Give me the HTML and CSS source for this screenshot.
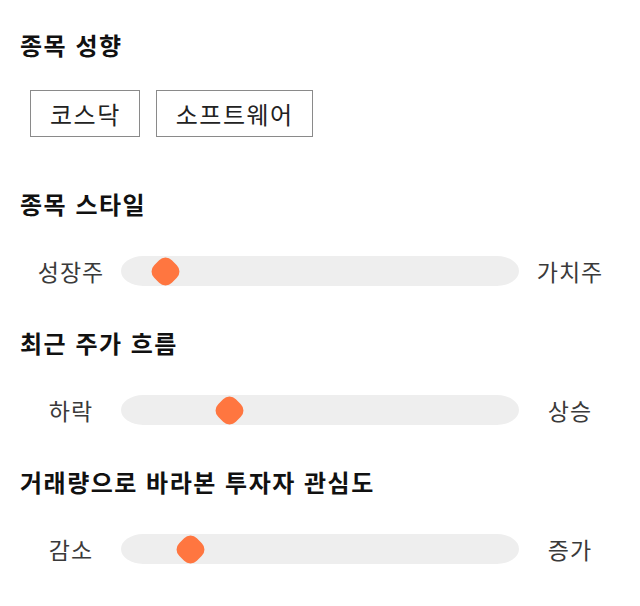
FILE: index.html
```html
<!DOCTYPE html>
<html lang="ko">
<head>
<meta charset="utf-8">
<link rel="stylesheet" href="styles.css">
</head>
<body>
<div class="page">
  <h2 class="title">종목 성향</h2>
  <div class="chips">
    <span class="chip">코스닥</span>
    <span class="chip">소프트웨어</span>
  </div>

  <h2 class="title title-gap">종목 스타일</h2>
  <div class="slider-row">
    <span class="lbl">성장주</span>
    <div class="track"><span class="thumb" style="left:44px"></span></div>
    <span class="lbl">가치주</span>
  </div>

  <h2 class="title">최근 주가 흐름</h2>
  <div class="slider-row">
    <span class="lbl">하락</span>
    <div class="track"><span class="thumb" style="left:108px"></span></div>
    <span class="lbl">상승</span>
  </div>

  <h2 class="title">거래량으로 바라본 투자자 관심도</h2>
  <div class="slider-row">
    <span class="lbl">감소</span>
    <div class="track"><span class="thumb" style="left:69px"></span></div>
    <span class="lbl">증가</span>
  </div>
</div>
</body>
</html>
```

FILE: styles.css
```css
html, body {
  margin: 0;
  padding: 0;
  background: #fff;
}
body {
  font-family: "Noto Sans CJK KR", "Noto Sans", sans-serif;
  color: #111;
}
.page {
  display: flex;
  flex-direction: column;
  padding: 30px 20px 0 20px;
}
.title {
  margin: 42px 0 0 0;
  font-size: 24px;
  font-weight: 700;
  letter-spacing: 1.5px;
  line-height: 30px;
  height: 30px;
  color: #111;
}
.page > .title:first-child {
  margin-top: 0;
}
.title-gap {
  margin-top: 52px;
}
.chips {
  display: flex;
  gap: 16px;
  margin-top: 30px;
  padding-left: 10px;
}
.chip {
  display: inline-flex;
  align-items: center;
  justify-content: center;
  height: 45px;
  padding: 0 18px 0 19px;
  border: 1px solid #8a8a8a;
  font-size: 24px;
  letter-spacing: 1.5px;
  color: #222;
}
.slider-row {
  display: flex;
  align-items: center;
  margin-top: 37px;
  height: 30px;
}
.lbl {
  width: 101px;
  text-align: center;
  font-size: 23px;
  letter-spacing: 1px;
  text-indent: 1px;
  color: #3a3a3a;
  flex: none;
}
.track {
  position: relative;
  flex: 1;
  height: 30px;
  background: #eeeeee;
  border-radius: 22px / 15px;
}
.thumb {
  position: absolute;
  top: 50%;
  width: 25px;
  height: 25px;
  margin-left: -12.5px;
  margin-top: -12.5px;
  background: #ff7640;
  border-radius: 9px;
  transform: rotate(45deg);
}
```
